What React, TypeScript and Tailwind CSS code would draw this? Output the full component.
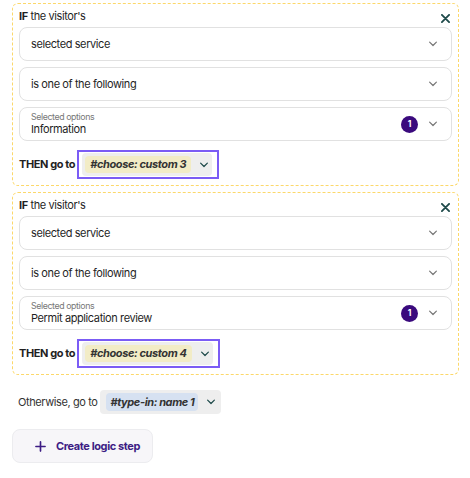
import React from 'react';

const font = { fontFamily: 'Inter, "Noto Sans", sans-serif', letterSpacing: '-0.025em' };

const Chevron: React.FC<{ className?: string }> = ({ className }) => (
  <svg viewBox="0 0 12 8" className={className} fill="none" stroke="currentColor" strokeWidth={1.6} strokeLinecap="round" strokeLinejoin="round">
    <path d="M1.5 1.5 6 6l4.5-4.5" />
  </svg>
);

const SelectBox: React.FC<{ value: string; label?: string; count?: number }> = ({ value, label, count }) => (
  <div className="flex h-[34px] items-center rounded-lg border border-[#e1e1e1] bg-white pl-[11px] pr-[13px]">
    <div className="flex-1 leading-none">
      {label && <div className="mb-[3px] text-[8.8px] text-[#777]">{label}</div>}
      <div className="text-[11px] text-[#1f1f1f]">{value}</div>
    </div>
    {count !== undefined && (
      <span className="mr-[10px] flex h-[17px] w-[17px] items-center justify-center rounded-full bg-[#3a0a7d] text-[8.5px] font-bold text-white">
        {count}
      </span>
    )}
    <Chevron className="h-[6px] w-[10px] text-[#777]" />
  </div>
);

const Rule: React.FC<{ option: string; target: string }> = ({ option, target }) => (
  <div className="rounded-md border border-dashed border-[#fcd86a] px-[6px] pb-[6px] pt-[4px]">
    <div className="flex h-[16px] items-center justify-between">
      <p className="text-[11px] text-[#1f1f1f]">
        <span className="font-bold">IF</span> the visitor's
      </p>
      <svg viewBox="0 0 10 10" className="mr-[2px] mt-[5px] h-[9px] w-[9px] text-[#1e4a4a]" stroke="currentColor" strokeWidth={2} strokeLinecap="round">
        <path d="M1 1l8 8M9 1 1 9" />
      </svg>
    </div>
    <div className="mt-[3px] flex flex-col gap-[6px]">
      <SelectBox value="selected service" />
      <SelectBox value="is one of the following" />
      <SelectBox label="Selected options" value={option} count={1} />
    </div>
    <div className="mt-[9px] flex items-center">
      <span className="text-[11px] font-bold text-[#1f1f1f]">THEN go to</span>
      <div className="ml-[2px] border-2 border-[#7b5cf5] py-[1px] pl-[3px] pr-[5px]">
        <div className="flex h-[23px] items-center rounded-sm bg-[#eeeeee] pl-[3px] pr-[3px]">
          <span className="flex h-[17px] items-center rounded-sm bg-[#f2ecc6] px-[5px] text-[11px] font-bold italic text-[#333]">
            #choose: {target}
          </span>
          <Chevron className="ml-[8px] h-[6px] w-[10px] text-[#1e4a4a]" />
        </div>
      </div>
    </div>
  </div>
);

export default function App() {
  return (
    <div className="min-h-[478px] w-[470px] bg-white pl-3 pr-[11px] pt-[3px]" style={font}>
      <div className="flex flex-col gap-[6px]">
        <Rule option="Information" target="custom 3" />
        <Rule option="Permit application review" target="custom 4" />
      </div>
      <div className="mt-[15px] flex items-center pl-[6px]">
        <span className="text-[11px] text-[#333]">Otherwise, go to</span>
        <div className="ml-[3px] flex h-[24px] items-center rounded-sm bg-[#eeeeee] pl-[6px] pr-[5px]">
          <span className="flex h-[18px] items-center rounded-sm bg-[#d6e1f1] px-[4px] text-[11px] font-bold italic text-[#333]">
            #type-in: name 1
          </span>
          <Chevron className="ml-[8px] h-[6px] w-[10px] text-[#1e4a4a]" />
        </div>
      </div>
      <button className="mt-[15px] flex h-[34px] w-[141px] items-center rounded-lg border border-[#ececef] bg-[#f7f6f9] pl-[22px]">
        <svg viewBox="0 0 12 12" className="h-[11px] w-[11px] text-[#3d1c84]" stroke="currentColor" strokeWidth={1.8} strokeLinecap="round">
          <path d="M6 1v10M1 6h10" />
        </svg>
        <span className="ml-[10px] text-[11px] font-bold text-[#3d1c84]">Create logic step</span>
      </button>
    </div>
  );
}
